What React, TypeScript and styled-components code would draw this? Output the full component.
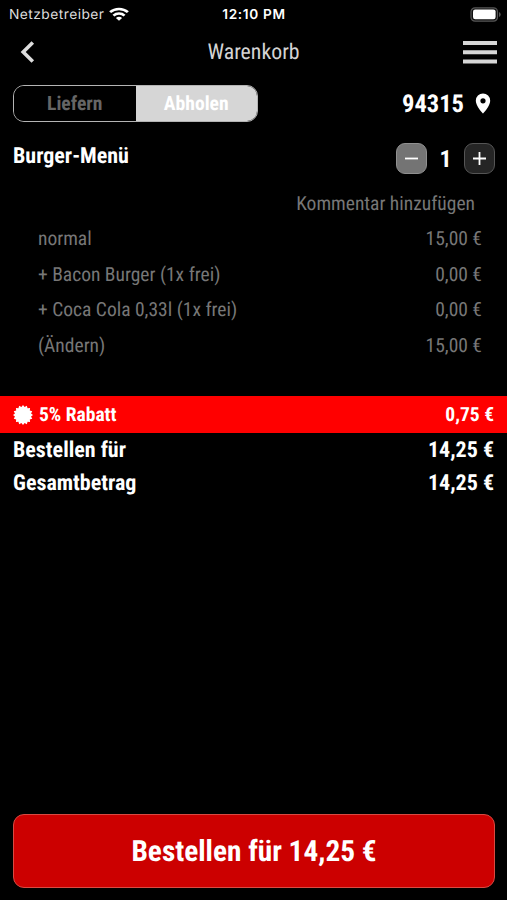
import React from "react";
import styled, { createGlobalStyle } from "styled-components";

const Global = createGlobalStyle`
  *{box-sizing:border-box}
  body{margin:0;background:#000;color:#fff;font-family:"Roboto Condensed",Roboto,sans-serif;font-stretch:75%;text-rendering:geometricPrecision;}
  button{font:inherit;font-stretch:inherit;color:inherit;padding:0;margin:0;background:none;border:0;letter-spacing:inherit;text-rendering:inherit}
`;
const Screen = styled.main`
  width:507px;height:900px;display:flex;flex-direction:column;background:#000;overflow:hidden;
`;
const Label = styled.span<{ $size: number; $bold?: boolean; $color?: string }>`
  display:block;white-space:nowrap;
  font-size:${p => p.$size}px;
  font-weight:${p => (p.$bold ? 700 : 400)};
  color:${p => p.$color || "#fff"};
`;
const StatusBar = styled.div`
  height:28px;display:grid;grid-template-columns:1fr auto 1fr;align-items:center;padding:0 6px 0 9px;
  font-family:Inter,sans-serif;font-stretch:100%;font-size:13.8px;
`;
const Carrier = styled.div`display:flex;align-items:center;gap:5px;color:#ddd;letter-spacing:.45px;`;
const CarrierName = styled.span`padding-top:1px;`;
const Clock = styled.div`font-weight:600;font-size:13.6px;letter-spacing:.7px;padding:1px 2px 0 0;`;
const BatterySlot = styled.div`display:flex;justify-content:flex-end;`;
const NavBar = styled.header`
  height:48px;display:grid;grid-template-columns:1fr auto 1fr;align-items:center;padding:0 10px 0 20px;
`;
const NavTitle = styled.div`padding-right:10px;`;
const IconButton = styled.button<{ $end?: boolean }>`
  display:flex;justify-self:${p => (p.$end ? "end" : "start")};
`;
const ModeRow = styled.div`
  height:55px;display:flex;align-items:center;justify-content:space-between;padding:0 16px 0 13px;
`;
const Toggle = styled.div`
  width:245px;height:37px;display:flex;border:1px solid #b4b4b4;border-radius:11px;overflow:hidden;
`;
const ToggleItem = styled.button<{ $active?: boolean }>`
  flex:1;display:flex;align-items:center;justify-content:center;
  background:${p => (p.$active ? "#d6d6d6" : "#000")};
`;
const Place = styled.div`display:flex;align-items:center;gap:11px;`;
const ItemHead = styled.div`
  height:54px;display:flex;align-items:flex-start;justify-content:space-between;padding:12px 12px 0 13px;
`;
const ItemName = styled.div`padding-top:1px;`;
const Stepper = styled.div`display:flex;align-items:center;`;
const Count = styled.div`width:37px;display:flex;justify-content:center;`;
const StepButton = styled.button<{ $light?: boolean }>`
  width:31px;height:31px;border-radius:9px;display:flex;align-items:center;justify-content:center;
  background:${p => (p.$light ? "#747474" : "#252525")};
  border:1px solid ${p => (p.$light ? "#909090" : "#555")};
`;
const Comment = styled.div`
  height:36px;display:flex;align-items:center;justify-content:flex-end;padding-right:32px;
`;
const Line = styled.div`
  height:35.5px;display:flex;align-items:center;justify-content:space-between;padding:0 25px 0 38px;
`;
const Discount = styled.div`
  height:37px;margin-top:33px;padding:0 13px;display:flex;align-items:center;justify-content:space-between;background:#f00;
`;
const DiscountName = styled.div`display:flex;align-items:center;gap:6px;`;
const Total = styled.div`
  height:33px;padding:2px 13px 0;display:flex;align-items:center;justify-content:space-between;
`;
const OrderButton = styled.button`
  height:74px;margin:auto 12px 12px 13px;padding-top:2px;border:1px solid #d84a42;border-radius:11px;background:#c00;
  display:flex;align-items:center;justify-content:center;
`;

const badge = Array.from({ length: 32 }, (_, i) => {
  const r = i % 2 ? 8.2 : 10;
  const a = (i * Math.PI) / 16;
  return `${(10 + r * Math.sin(a)).toFixed(2)},${(10 - r * Math.cos(a)).toFixed(2)}`;
}).join(" ");

const lines = [
  ["normal", "15,00 €"],
  ["+ Bacon Burger (1x frei)", "0,00 €"],
  ["+ Coca Cola 0,33l (1x frei)", "0,00 €"],
  ["(Ändern)", "15,00 €"],
];

export default function App() {
  return (
    <Screen>
      <Global />
      <StatusBar>
        <Carrier>
          <CarrierName>Netzbetreiber</CarrierName>
          <svg width="20" height="14" viewBox="0 0 18 14" preserveAspectRatio="none" fill="none" stroke="#fff" strokeWidth="2.5">
            <path d="M1 5.2a11.5 11.5 0 0 1 16 0M4 8.6a7.2 7.2 0 0 1 10 0" />
            <path d="M9 13.8 6.2 11a4 4 0 0 1 5.6 0Z" fill="#fff" stroke="none" />
          </svg>
        </Carrier>
        <Clock>12:10 PM</Clock>
        <BatterySlot>
          <svg width="31" height="15" viewBox="0 0 31 15">
            <rect x="1" y=".8" width="26.5" height="13.4" rx="4" fill="#111" stroke="#555" strokeWidth="1.2" />
            <rect x="3" y="2.4" width="22.6" height="9.8" rx="2.2" fill="#fff" />
            <path d="M29 5v5q1.7-.8 1.7-2.5T29 5" fill="#555" />
          </svg>
        </BatterySlot>
      </StatusBar>
      <NavBar>
        <IconButton aria-label="Zurück">
          <svg width="15" height="22" viewBox="0 0 15 22" fill="none" stroke="#ddd" strokeWidth="3.6">
            <path d="M12.8 1.5 3.2 11l9.6 9.5" />
          </svg>
        </IconButton>
        <NavTitle><Label $size={21.8} $color="#d4d4d4">Warenkorb</Label></NavTitle>
        <IconButton $end aria-label="Menü">
          <svg width="34" height="23" viewBox="0 0 34 23" fill="#d6d6d6">
            <path d="M0 0h34v4H0zM0 9.3h34v4H0zM0 18.6h34v4H0z" />
          </svg>
        </IconButton>
      </NavBar>
      <ModeRow>
        <Toggle>
          <ToggleItem><Label $size={19.6} $bold $color="#666">Liefern</Label></ToggleItem>
          <ToggleItem $active><Label $size={19.6} $bold>Abholen</Label></ToggleItem>
        </Toggle>
        <Place>
          <Label $size={24.5} $bold>94315</Label>
          <svg width="16" height="21" viewBox="0 0 16 21">
            <path fillRule="evenodd" fill="#fff" d="M8 .5a7.2 7.2 0 0 0-7.2 7.2C.8 13 8 20.5 8 20.5S15.2 13 15.2 7.7A7.2 7.2 0 0 0 8 .5m0 4.7a2.6 2.6 0 1 1 0 5.2 2.6 2.6 0 0 1 0-5.2" />
          </svg>
        </Place>
      </ModeRow>
      <ItemHead>
        <ItemName><Label $size={22} $bold>Burger-Menü</Label></ItemName>
        <Stepper>
          <StepButton $light aria-label="Weniger">
            <svg width="15" height="15" stroke="#fff" strokeWidth="1.8"><path d="M1 7.5h13" /></svg>
          </StepButton>
          <Count><Label $size={24} $bold>1</Label></Count>
          <StepButton aria-label="Mehr">
            <svg width="15" height="15" stroke="#fff" strokeWidth="1.8"><path d="M1 7.5h13M7.5 1v13" /></svg>
          </StepButton>
        </Stepper>
      </ItemHead>
      <Comment><Label $size={19.5} $color="#777">Kommentar hinzufügen</Label></Comment>
      {lines.map(([name, price]) => (
        <Line key={name}>
          <Label $size={19.5} $color="#777">{name}</Label>
          <Label $size={19.5} $color="#777">{price}</Label>
        </Line>
      ))}
      <Discount>
        <DiscountName>
          <svg width="20" height="20" viewBox="0 0 20 20"><polygon points={badge} fill="#fff" /></svg>
          <Label $size={19.5} $bold>5% Rabatt</Label>
        </DiscountName>
        <Label $size={19.5} $bold>0,75 €</Label>
      </Discount>
      <Total>
        <Label $size={22} $bold>Bestellen für</Label>
        <Label $size={22} $bold>14,25 €</Label>
      </Total>
      <Total>
        <Label $size={22} $bold>Gesamtbetrag</Label>
        <Label $size={22} $bold>14,25 €</Label>
      </Total>
      <OrderButton><Label $size={29.3} $bold>Bestellen für 14,25 €</Label></OrderButton>
    </Screen>
  );
}
